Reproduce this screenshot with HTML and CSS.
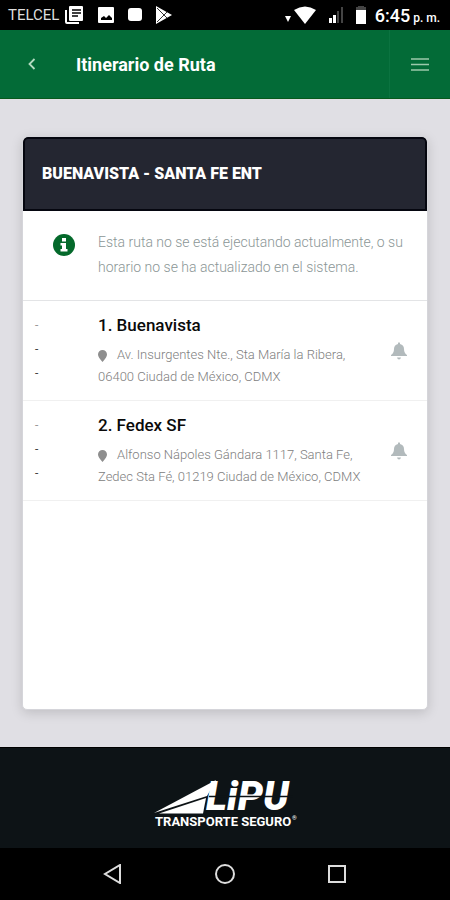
FILE: index.html
```html
<!DOCTYPE html>
<html lang="es">
<head>
    <meta charset="UTF-8">
    <meta name="viewport" content="width=device-width, initial-scale=1.0">
    <title>Itinerario de Ruta</title>
    <link rel="stylesheet" href="styles.css">
</head>
<body>

    <div class="status-bar">
        <span class="carrier">TELCEL</span>
        <div class="notifications">
            <svg width="20" height="20" viewBox="0 0 20 20">
                <path d="M1 5v12q0 2 2 2h12v-2H3V5z" fill="#fff"/>
                <rect x="5" y="1" width="14" height="15" rx="1" fill="#fff"/>
                <path d="M8 5h9M8 8h9M8 11h6" stroke="#000" stroke-width="1.5"/>
            </svg>
            <svg width="18" height="18" viewBox="0 0 18 18">
                <rect x="1" y="1" width="16" height="16" rx="1" fill="#fff"/>
                <path d="M4 14v-2l3-2 2 2 3-3 3 3v2z" fill="#000"/>
            </svg>
            <svg width="14" height="14" viewBox="0 0 14 14">
                <rect x="0" y="0" width="14" height="13" rx="3" fill="#fff"/>
            </svg>
            <svg width="18" height="18" viewBox="0 0 18 18">
                <path d="M1 0L17 9 1 18z" fill="#fff"/>
                <path d="M2 2l10 10M2 16L12 6" stroke="#333" stroke-width="1"/>
            </svg>
        </div>
        <div class="system">
            <svg width="32" height="18" viewBox="0 0 32 18">
                <path d="M0 10h6l-3 6z" fill="#fff"/>
                <path d="M9 4Q20-3 31 4L20 18z" fill="#fff"/>
            </svg>
            <svg width="14" height="18" viewBox="0 0 14 18">
                <path d="M0 12h3v5H0zM4 9h3v8H4z" fill="#fff"/>
                <path d="M8 5h2v12H8zM12 1h2v16h-2z" fill="#444"/>
            </svg>
            <svg width="12" height="18" viewBox="0 0 12 18">
                <path d="M3 0h6v1h2v4H1V1h2z" fill="#444"/>
                <rect x="1" y="4" width="10" height="14" fill="#fff"/>
            </svg>
        </div>
        <span class="clock">6:45<small>p. m.</small></span>
    </div>

    <header class="top-bar">
        <button class="back" aria-label="Regresar">
            <svg width="8" height="12" viewBox="0 0 8 12">
                <path d="M6.500 1L1.500 6l5 5" fill="none" stroke="#b5dcc2" stroke-width="1.800"/>
            </svg>
        </button>
        <h1>Itinerario de Ruta</h1>
        <button class="menu" aria-label="Menú">
            <svg width="18" height="13" viewBox="0 0 18 13">
                <path d="M0 1h18M0 6.500h18M0 12h18" stroke="#9cc9ab" stroke-width="1.700"/>
            </svg>
        </button>
    </header>

    <main>
        <section class="card">
            <h2>BUENAVISTA - SANTA FE ENT</h2>

            <div class="notice">
                <svg width="22" height="22" viewBox="0 0 22 22">
                    <circle cx="11" cy="11" r="11" fill="#04692b"/>
                    <path d="M9 4h4v3.500H9zM7.500 9H13v6h1.500v2.500h-7V15H9v-3.500H7.500z" fill="#fff"/>
                </svg>
                <p>Esta ruta no se está ejecutando actualmente, o su horario no se ha actualizado en el sistema.</p>
            </div>

            <ol class="stops">
                <li class="stop">
                    <div class="times"><span>-</span><span>-</span><span>-</span></div>
                    <div class="info">
                        <h3>1. Buenavista</h3>
                        <p>
                            <svg class="pin" width="9" height="12" viewBox="0 0 9 12"><path d="M4.500 0a4.500 4.500 0 0 1 4.500 4.500Q9 7 4.500 12 0 7 0 4.500A4.500 4.500 0 0 1 4.500 0z"/></svg>Av. Insurgentes Nte., Sta María la Ribera, 06400 Ciudad de México, CDMX
                        </p>
                    </div>
                    <button class="bell" aria-label="Activar aviso">
                        <svg width="16" height="18" viewBox="0 0 16 18"><path d="M7 1q1-1.500 2 0v1q4 1 4 5 0 4 3 6v1H0v-1q3-2 3-6 0-4 4-5zM6 15.500h4Q9.500 17.500 8 17.500T6 15.500z"/></svg>
                    </button>
                </li>
                <li class="stop">
                    <div class="times"><span>-</span><span>-</span><span>-</span></div>
                    <div class="info">
                        <h3>2. Fedex SF</h3>
                        <p>
                            <svg class="pin" width="9" height="12" viewBox="0 0 9 12"><path d="M4.500 0a4.500 4.500 0 0 1 4.500 4.500Q9 7 4.500 12 0 7 0 4.500A4.500 4.500 0 0 1 4.500 0z"/></svg>Alfonso Nápoles Gándara 1117, Santa Fe, Zedec Sta Fé, 01219 Ciudad de México, CDMX
                        </p>
                    </div>
                    <button class="bell" aria-label="Activar aviso">
                        <svg width="16" height="18" viewBox="0 0 16 18"><path d="M7 1q1-1.500 2 0v1q4 1 4 5 0 4 3 6v1H0v-1q3-2 3-6 0-4 4-5zM6 15.500h4Q9.500 17.500 8 17.500T6 15.500z"/></svg>
                    </button>
                </li>
            </ol>
        </section>
    </main>

    <footer>
        <svg class="logo" width="142" height="52" viewBox="0 0 142 52">
            <path d="M0 33L62 0 53 16z" fill="#fff"/>
            <path d="M5 33.500L52 18 49 33.500z" fill="#fff"/>
            <text class="logo-name" x="52" y="30">LiPU</text>
            <path d="M55 16.500h84" stroke="#0d1316" stroke-width="1.500"/>
            <text class="logo-tag" x="1" y="46">TRANSPORTE SEGURO</text>
            <text class="logo-mark" x="138" y="40">®</text>
        </svg>
    </footer>

    <nav class="system-nav">
        <button aria-label="Atrás">
            <svg width="20" height="20" viewBox="0 0 20 20"><path d="M17 1v18L2 10z"/></svg>
        </button>
        <button aria-label="Inicio">
            <svg width="20" height="20" viewBox="0 0 20 20"><circle cx="10" cy="10" r="9"/></svg>
        </button>
        <button aria-label="Recientes">
            <svg width="20" height="20" viewBox="0 0 20 20"><rect x="2" y="2" width="16" height="16"/></svg>
        </button>
    </nav>

</body>
</html>
```
FILE: styles.css
```css
* {
    box-sizing: border-box;
}

body {
    display: flex;
    flex-direction: column;
    min-height: 100vh;
    margin: 0;
    font-family: Roboto, sans-serif;
    background-color: #e0dfe4;
}

h1, h2, h3, p, ol {
    margin: 0;
    padding: 0;
}

svg {
    display: block;
}

button {
    display: flex;
    justify-content: center;
    align-items: center;
    padding: 0;
    background: none;
    border: none;
    cursor: pointer;
}

/* Phone status bar */
.status-bar {
    display: flex;
    align-items: center;
    height: 30px;
    padding: 0 10px 0 8px;
    background-color: #000;
    color: #fff;
}

.carrier {
    font-size: 15px;
    color: #ddd;
}

.notifications {
    display: flex;
    align-items: center;
    gap: 13px;
    margin-left: 5px;
}

.system {
    display: flex;
    align-items: center;
    gap: 12px;
    margin-left: auto;
}

.clock {
    margin-left: 8px;
    font-size: 18px;
    font-weight: 500;
}

.clock small {
    margin-left: 3px;
    font-size: 12px;
}

/* Green title bar */
.top-bar {
    display: flex;
    align-items: stretch;
    height: 69px;
    background-color: #036b37;
    border-bottom: 1px solid #07591c;
    color: #fff;
}

.back {
    width: 64px;
}

.top-bar h1 {
    flex: 1;
    align-self: center;
    padding-left: 12px;
    font-size: 18px;
    font-weight: 700;
}

.menu {
    width: 61px;
    border-left: 1px solid #0b7340;
}

/* Route card */
main {
    display: flex;
    flex: 1;
    padding: 37px 22px;
}

.card {
    flex: 1;
    background-color: #fff;
    border: 1px solid #d5d5da;
    border-radius: 5px;
    box-shadow: 0 3px 12px rgba(0, 0, 0, 0.15);
    overflow: hidden;
}

.card h2 {
    padding: 24px 17px;
    background-color: #242631;
    border: 2px solid #05060f;
    border-radius: 5px 5px 0 0;
    color: #fff;
    font-size: 16px;
    font-weight: 900;
    line-height: 22px;
}

.notice {
    display: flex;
    gap: 23px;
    padding: 19px 16px 20px 30px;
    border-bottom: 1px solid #e3e4e6;
}

.notice svg {
    flex: none;
    margin-top: 4px;
}

.notice p {
    color: #8b9696;
    font-size: 14px;
    font-weight: 300;
    line-height: 25px;
}

.stops {
    list-style: none;
}

.stop {
    display: flex;
    padding: 12px 20px 12px 12px;
    border-bottom: 1px solid #f0f0f0;
}

.times {
    display: flex;
    flex-direction: column;
    width: 63px;
    color: #444;
    font-size: 12px;
    line-height: 24px;
}

.times span:first-child {
    color: #999;
}

.info {
    flex: 1;
}

.info h3 {
    margin-bottom: 7px;
    color: #0a0a0a;
    font-size: 17px;
    font-weight: 500;
    line-height: 24px;
}

.info p {
    color: #808080;
    font-size: 13px;
    font-weight: 300;
    line-height: 22px;
}

.pin {
    display: inline-block;
    margin-right: 10px;
    vertical-align: middle;
    fill: #8e8e8e;
}

.bell {
    align-self: center;
    justify-content: flex-end;
    width: 36px;
    height: 36px;
}

.bell svg {
    flex: none;
    fill: #b2babc;
}

/* Company logo */
footer {
    display: flex;
    justify-content: center;
    padding: 32px 0 16px;
    background-color: #0d1316;
    border-top: 1px solid #000;
}

.logo-name, .logo-tag, .logo-mark {
    fill: #fff;
    font-weight: 700;
}

.logo {
    overflow: visible;
}

.logo-name {
    font-size: 40px;
    font-style: italic;
    font-weight: 900;
}

.logo-tag {
    font-size: 13px;
}

.logo-mark {
    font-size: 6px;
}

/* Phone navigation buttons */
.system-nav {
    display: flex;
    justify-content: center;
    gap: 92px;
    height: 52px;
    background-color: #000;
}

.system-nav svg {
    fill: none;
    stroke: #ddd;
    stroke-width: 2;
}
```
